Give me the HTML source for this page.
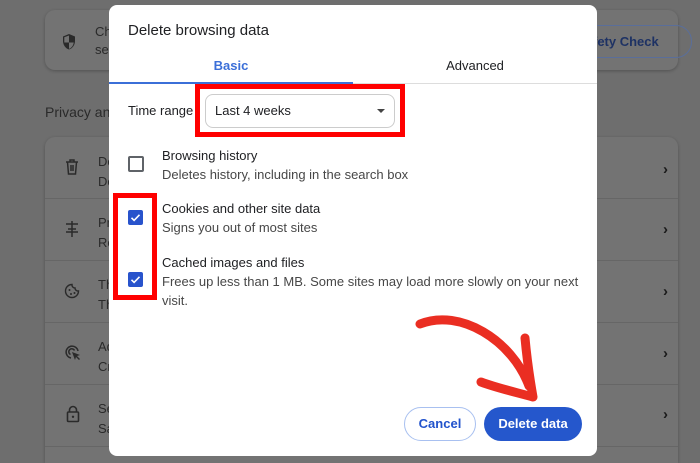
<!DOCTYPE html><html style="overflow:hidden"><head><style>
html,body{margin:0;width:700px;height:463px;overflow:hidden}
body{background:#6e6e6e;font-family:"Liberation Sans",Arial,sans-serif;position:relative}
.a{position:absolute}
.card{background:#737373;border-radius:10px;box-shadow:0 1px 3px rgba(0,0,0,.25)}
.dk{color:#2a2a2a}
.chev{position:absolute;left:663px;font-size:15px;color:#1a1a1a;font-weight:bold}
.d{position:absolute;left:45px;width:633px;height:1px;background:#666}
.cb{position:absolute;left:128px;width:15px;height:15px;border-radius:2px}
.t1{font-size:13px;color:#202124;position:absolute;left:162px}
.t2{font-size:13px;color:#474747;position:absolute;left:162px;line-height:19px}
</style></head><body>
<div class="a card" style="left:45px;top:10px;width:633px;height:60px"></div>
<svg class="a" style="left:61px;top:33px" width="16" height="18" viewBox="0 0 16 18"><path d="M8 1L2 3.5V8c0 4 2.6 7.5 6 8.5 3.4-1 6-4.5 6-8.5V3.5z" fill="#2a2a2a"/><path d="M8 2.5v7H3.3V4.3zM8 9.5h4.7c-.3 3-2.2 5.5-4.7 6.4z" fill="#737373"/></svg>
<div class="a dk" style="left:95px;top:24px;font-size:13px">Ch<br><span style="line-height:22px">se</span></div>
<div class="a" style="left:580px;top:25px;width:110px;height:31px;border:1px solid #5a6e9a;border-radius:16px;color:#1e3264;font-size:13px;font-weight:bold;line-height:31px;text-indent:12px">fety Check</div>
<div class="a dk" style="left:45px;top:104px;font-size:14px">Privacy an</div>
<div class="a card" style="left:45px;top:137px;width:633px;height:326px;border-radius:10px 10px 0 0"></div>
<div class="d" style="top:198px"></div><div class="d" style="top:260px"></div><div class="d" style="top:322px"></div><div class="d" style="top:384px"></div><div class="d" style="top:446px"></div>
<div class="a dk" style="left:98px;top:152px;font-size:13px;line-height:20px">De<br>De</div>
<div class="a dk" style="left:98px;top:213px;font-size:13px;line-height:20px">Pr<br>Re</div>
<div class="a dk" style="left:98px;top:275px;font-size:13px;line-height:20px">Th<br>Th</div>
<div class="a dk" style="left:98px;top:337px;font-size:13px;line-height:20px">Ad<br>Cr</div>
<div class="a dk" style="left:98px;top:399px;font-size:13px;line-height:20px">Se<br>Sa</div>
<svg class="a" style="left:65px;top:159px" width="14" height="16"><path d="M1 3h12M5 3V1h4v2M2.5 3l1 12h7l1-12M6 6v6M8 6v6" stroke="#2a2a2a" stroke-width="1.5" fill="none"/></svg>
<svg class="a" style="left:64px;top:220px" width="16" height="18"><path d="M8 1v16M2 4h12M4 9h8M2 12h12" stroke="#2a2a2a" stroke-width="1.5" fill="none"/></svg>
<svg class="a" style="left:64px;top:283px" width="16" height="16"><path d="M8 1.5A6.5 6.5 0 1 0 14.5 8 3 3 0 0 1 11 5 3 3 0 0 1 8 1.5z" stroke="#2a2a2a" stroke-width="1.4" fill="none"/><circle cx="5.5" cy="7" r="1" fill="#2a2a2a"/><circle cx="7" cy="11" r="1" fill="#2a2a2a"/><circle cx="10.5" cy="10" r="1" fill="#2a2a2a"/></svg>
<svg class="a" style="left:64px;top:344px" width="18" height="18"><path d="M14 7A6 6 0 1 0 7 14M10.5 6.5A3 3 0 1 0 6.5 10.5" stroke="#2a2a2a" stroke-width="1.5" fill="none"/><path d="M8 8l8 3-3 1 3 3-1 1-3-3-1 3z" fill="#2a2a2a"/></svg>
<svg class="a" style="left:66px;top:405px" width="14" height="18"><path d="M3.5 7V5a3.5 3.5 0 0 1 7 0v2" stroke="#2a2a2a" stroke-width="1.6" fill="none"/><rect x="1.5" y="7" width="11" height="9.5" rx="1" stroke="#2a2a2a" stroke-width="1.6" fill="none"/><circle cx="7" cy="11.8" r="1.2" fill="#2a2a2a"/></svg>
<div class="chev" style="top:161px">&#8250;</div><div class="chev" style="top:221px">&#8250;</div><div class="chev" style="top:283px">&#8250;</div><div class="chev" style="top:345px">&#8250;</div><div class="chev" style="top:406px">&#8250;</div>

<div class="a" style="left:109px;top:5px;width:488px;height:451px;background:#fff;border-radius:8px"></div>
<div class="a" style="left:128px;top:22px;font-size:15px;color:#202124">Delete browsing data</div>
<div class="a" style="left:109px;top:58px;width:244px;text-align:center;font-size:13px;font-weight:bold;color:#3b6fd8">Basic</div>
<div class="a" style="left:353px;top:58px;width:244px;text-align:center;font-size:13px;color:#202124">Advanced</div>
<div class="a" style="left:109px;top:83px;width:488px;height:1px;background:#ddd"></div>
<div class="a" style="left:109px;top:82px;width:244px;height:2px;background:#3b6fd8"></div>
<div class="a" style="left:128px;top:103px;font-size:13px;color:#202124">Time range</div>
<div class="a" style="left:205px;top:94px;width:188px;height:32px;border:1px solid #ccc;border-radius:8px"></div>
<div class="a" style="left:215px;top:103px;font-size:13px;color:#202124">Last 4 weeks</div>
<div class="a" style="left:377px;top:109px;border-left:4px solid transparent;border-right:4px solid transparent;border-top:4px solid #444"></div>
<div class="a" style="left:195px;top:84px;width:200px;height:43px;border:5px solid #f00"></div>
<div class="cb" style="top:156px;border:2px solid #5f6368;width:12px;height:12px"></div>
<div class="t1" style="top:148px">Browsing history</div>
<div class="t2" style="top:165px">Deletes history, including in the search box</div>
<div class="cb" style="top:210px;background:#2853cc"></div>
<div class="cb" style="top:272px;background:#2853cc"></div>
<svg class="a" style="left:128px;top:210px" width="15" height="15"><path d="M3.5 7.8l2.6 2.6 5.4-5.6" stroke="#fff" stroke-width="1.6" fill="none"/></svg>
<svg class="a" style="left:128px;top:272px" width="15" height="15"><path d="M3.5 7.8l2.6 2.6 5.4-5.6" stroke="#fff" stroke-width="1.6" fill="none"/></svg>
<div class="t1" style="top:201px">Cookies and other site data</div>
<div class="t2" style="top:218px">Signs you out of most sites</div>
<div class="t1" style="top:255px">Cached images and files</div>
<div class="t2" style="top:272px">Frees up less than 1 MB. Some sites may load more slowly on your next<br>visit.</div>
<div class="a" style="left:113px;top:193px;width:34px;height:97px;border:5px solid #f00"></div>
<svg class="a" style="left:400px;top:300px" width="170" height="110"><path d="M20 24C60 8 112 40 129 86" stroke="#ea2e22" stroke-width="9" fill="none" stroke-linecap="round"/><path d="M125 38C127 60 130 80 133 97C115 92 97 88 81 82" stroke="#ea2e22" stroke-width="9" fill="none" stroke-linecap="round" stroke-linejoin="round"/></svg>
<div class="a" style="left:404px;top:407px;width:70px;height:32px;border:1px solid #a8c0f0;border-radius:17px;text-align:center;line-height:32px;font-size:13px;font-weight:bold;color:#2253cc">Cancel</div>
<div class="a" style="left:484px;top:407px;width:98px;height:34px;background:#2557cc;border-radius:17px;text-align:center;line-height:34px;font-size:13px;font-weight:bold;color:#fff">Delete data</div>
</body></html>
